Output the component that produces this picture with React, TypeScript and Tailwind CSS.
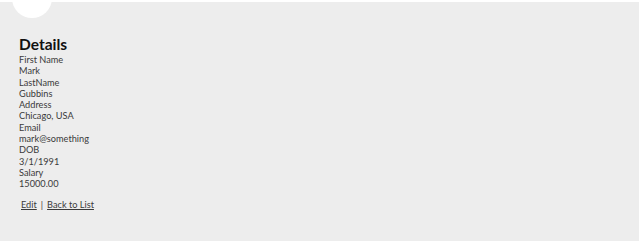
import React from "react";

const rows: [string, string][] = [
  ["First Name", "Mark"],
  ["LastName", "Gubbins"],
  ["Address", "Chicago, USA"],
  ["Email", "mark@something"],
  ["DOB", "3/1/1991"],
  ["Salary", "15000.00"],
];

export default function App() {
  return (
    <div className="w-[640px] h-[241px] bg-white pt-[2px] overflow-hidden" style={{ fontFamily: 'Lato, "Noto Sans", sans-serif' }}>
      <div className="relative h-[239px] mr-[1px] bg-[#ededed] overflow-hidden">
        <div className="absolute left-[12px] top-[-24px] w-[40px] h-[40px] rounded-full bg-white" />
        <div className="pl-[19px] pt-[32px]">
          <h2 className="text-[15.5px] font-bold leading-[20px] text-[#111]">Details</h2>
          <dl className="text-[9.2px] leading-[11.3px] text-[#3a3a3a]">
            {rows.map(([k, v]) => (
              <React.Fragment key={k}>
                <dt>{k}</dt>
                <dd>{v}</dd>
              </React.Fragment>
            ))}
          </dl>
          <div className="mt-[9px] pl-[2px] text-[9.2px] leading-[11px] text-[#3a3a3a] flex gap-[4px]">
            <a className="underline">Edit</a>
            <span>|</span>
            <a className="underline">Back to List</a>
          </div>
        </div>
      </div>
    </div>
  );
}
